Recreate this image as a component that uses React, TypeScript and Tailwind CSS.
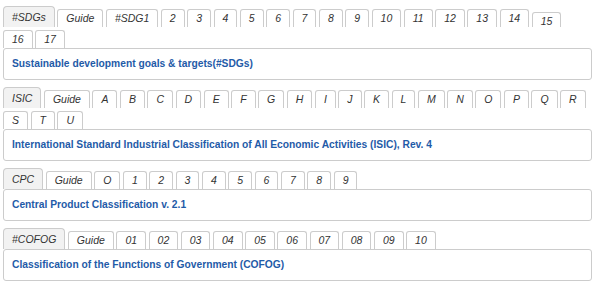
import React from "react";

type Section = {
	active: string;
	tabs: string[];
	title: string;
};

const sections: Section[] = [
	{
		active: "#SDGs",
		tabs: ["Guide", "#SDG1", "2", "3", "4", "5", "6", "7", "8", "9", "10", "11", "12", "13", "14", "15", "16", "17"],
		title: "Sustainable development goals & targets(#SDGs)",
	},
	{
		active: "ISIC",
		tabs: ["Guide", "A", "B", "C", "D", "E", "F", "G", "H", "I", "J", "K", "L", "M", "N", "O", "P", "Q", "R", "S", "T", "U"],
		title: "International Standard Industrial Classification of All Economic Activities (ISIC), Rev. 4",
	},
	{
		active: "CPC",
		tabs: ["Guide", "O", "1", "2", "3", "4", "5", "6", "7", "8", "9"],
		title: "Central Product Classification v. 2.1",
	},
	{
		active: "#COFOG",
		tabs: ["Guide", "01", "02", "03", "04", "05", "06", "07", "08", "09", "10"],
		title: "Classification of the Functions of Government (COFOG)",
	},
];

function Tab({ label, active, low }: { label: string; active?: boolean; low?: boolean }) {
	// each slot is one row high; inactive tabs sit lower than the active one
	return (
		<li className="h-[21px] flex items-end">
			{active ? (
				<div className="h-[21px] px-[8px] flex items-center border border-b-0 border-[#cccccc] rounded-t-[4px] bg-[#f2f2f2] text-[#333333]">
					{label}
				</div>
			) : low ? (
				<div className="h-[15px] px-[8px] pt-[3px] flex items-center border border-b-0 border-[#cccccc] rounded-t-[3px] bg-white text-[#333333]">
					{label}
				</div>
			) : (
				<div className="h-[18px] px-[8px] flex items-center border border-b-0 border-[#cccccc] rounded-t-[3px] bg-white text-[#333333]">
					{label}
				</div>
			)}
		</li>
	);
}

export default function App() {
	return (
		<div className="min-h-screen bg-white pt-[6px] font-['Liberation_Sans',Arial,sans-serif]">
			<div className="ml-[3px] w-[589px] flex flex-col gap-[7px]">
				{sections.map((s) => (
					<div key={s.active}>
						{/* Tabs */}
						<ul className="flex flex-wrap items-end gap-x-[2.5px] italic text-[10.5px] leading-none">
							<Tab label={s.active} active />
							{s.tabs.map((t) => (
								<Tab key={t} label={t} low={s.active === "#SDGs" && t === "15"} />
							))}
						</ul>

						{/* Panel */}
						<div className="h-[32px] px-[8px] flex items-center border border-[#cccccc] rounded-[3px] bg-white">
							<a href="#" className="text-[10.25px] font-bold text-[#1f5ba8] leading-none">
								{s.title}
							</a>
						</div>
					</div>
				))}
			</div>
		</div>
	);
}
